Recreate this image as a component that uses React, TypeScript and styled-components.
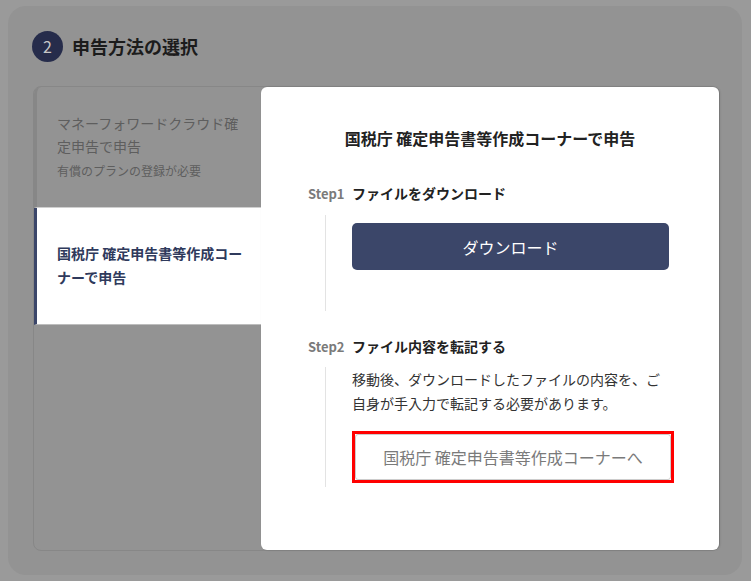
import styled, { createGlobalStyle } from "styled-components";

const GlobalStyle = createGlobalStyle`
  html, body {
    margin: 0;
    padding: 0;
    background: #9a9a9a;
  }
  body {
    font-family: "Noto Sans CJK JP", "Noto Sans", sans-serif;
    padding: 6px 0 0 8px;
  }
`;

const Card = styled.section`
  box-sizing: border-box;
  width: 734px;
  height: 569px;
  padding: 24px 22px 24px 24px;
  background: #939393;
  border-radius: 18px;
  display: flex;
  flex-direction: column;
`;

const Header = styled.div`
  display: flex;
  align-items: center;
  gap: 9px;
  height: 32px;
  margin-bottom: 24px;
`;

const StepNumber = styled.span`
  width: 31px;
  height: 31px;
  border-radius: 50%;
  background: #262c4b;
  color: #c6c6c6;
  font-size: 16px;
  display: flex;
  align-items: center;
  justify-content: center;
`;

const HeaderTitle = styled.h2`
  margin: 0;
  font-size: 18px;
  font-weight: 700;
  color: #1c1c1c;
`;

const Panel = styled.div`
  flex: 1;
  margin-left: 1px;
  display: flex;
  border: 1px solid #878787;
  border-radius: 8px;
`;

const TabList = styled.div`
  width: 227px;
  flex-shrink: 0;
  display: flex;
  flex-direction: column;
`;

const Tab = styled.div<{ $active?: boolean }>`
  box-sizing: border-box;
  padding: ${({ $active }) => ($active ? "33px 14px 35px 20px" : "25px 14px 26px 20px")};
  border-left: 3px solid ${({ $active }) => ($active ? "#3b4669" : "#878787")};
  border-bottom: 1px solid ${({ $active }) => ($active ? "#bdbdbd" : "#cfcfcf")};
  background: ${({ $active }) => ($active ? "#ffffff" : "transparent")};
  border-top-left-radius: ${({ $active }) => ($active ? "0" : "7px")};
`;

const TabTitle = styled.div<{ $active?: boolean }>`
  font-size: 14px;
  line-height: ${({ $active }) => ($active ? "24px" : "23px")};
  font-weight: ${({ $active }) => ($active ? 700 : 400)};
  color: ${({ $active }) => ($active ? "#2f3a5c" : "#5e5e5e")};
`;

const TabNote = styled.div`
  margin-top: 3px;
  font-size: 12px;
  line-height: 20px;
  color: #5e5e5e;
`;

const Detail = styled.div`
  flex: 1;
  min-width: 0;
  background: #ffffff;
  border-radius: 6px;
  box-shadow: 1px 0 2px rgba(0, 0, 0, 0.15);
  padding: 39px 0 0 47px;
`;

const DetailTitle = styled.h3`
  margin: 0 47px 31px 0;
  text-align: center;
  font-size: 16px;
  line-height: 24px;
  font-weight: 700;
  color: #222222;
`;

const StepHead = styled.div`
  display: flex;
  align-items: center;
  height: 24px;
`;

const StepLabel = styled.span`
  width: 44px;
  font-size: 13px;
  font-weight: 700;
  color: #7a7a7a;
`;

const StepTitle = styled.span`
  font-size: 14px;
  font-weight: 700;
  color: #222222;
`;

const StepBody = styled.div<{ $gap: number; $top: number; $bottom: number }>`
  margin: ${({ $gap }) => $gap}px 0 0 17px;
  padding: ${({ $top }) => $top}px 0 ${({ $bottom }) => $bottom}px 26px;
  border-left: 1px solid #e3e3e3;
`;

const Spacer = styled.div`
  height: 23px;
`;

const PrimaryButton = styled.button`
  display: block;
  width: 317px;
  height: 47px;
  border: none;
  border-radius: 5px;
  background: #3b4669;
  color: #ffffff;
  font-family: inherit;
  font-size: 16px;
`;

const Description = styled.p`
  margin: 0;
  max-width: 317px;
  font-size: 14px;
  line-height: 24px;
  color: #333333;
`;

const Highlight = styled.div`
  margin-top: 16px;
  width: 322px;
  box-sizing: border-box;
  border: 3px solid #ff0000;
`;

const OutlineButton = styled.button`
  display: block;
  width: 100%;
  height: 46px;
  border: 1px solid #cccccc;
  border-radius: 3px;
  background: #ffffff;
  color: #7a7a7a;
  font-family: inherit;
  font-size: 16px;
`;

export default function App() {
  return (
    <>
      <GlobalStyle />
      <Card>
        <Header>
          <StepNumber>2</StepNumber>
          <HeaderTitle>申告方法の選択</HeaderTitle>
        </Header>

        <Panel>
          <TabList>
            <Tab>
              <TabTitle>マネーフォワードクラウド確定申告で申告</TabTitle>
              <TabNote>有償のプランの登録が必要</TabNote>
            </Tab>
            <Tab $active>
              <TabTitle $active>国税庁 確定申告書等作成コーナーで申告</TabTitle>
            </Tab>
          </TabList>

          <Detail>
            <DetailTitle>国税庁 確定申告書等作成コーナーで申告</DetailTitle>

            <StepHead>
              <StepLabel>Step1</StepLabel>
              <StepTitle>ファイルをダウンロード</StepTitle>
            </StepHead>
            <StepBody $gap={10} $top={8} $bottom={41}>
              <PrimaryButton>ダウンロード</PrimaryButton>
            </StepBody>

            <Spacer />

            <StepHead>
              <StepLabel>Step2</StepLabel>
              <StepTitle>ファイル内容を転記する</StepTitle>
            </StepHead>
            <StepBody $gap={9} $top={0} $bottom={4}>
              <Description>
                移動後、ダウンロードしたファイルの内容を、ご自身が手入力で転記する必要があります。
              </Description>
              <Highlight>
                <OutlineButton>国税庁 確定申告書等作成コーナーへ</OutlineButton>
              </Highlight>
            </StepBody>
          </Detail>
        </Panel>
      </Card>
    </>
  );
}
